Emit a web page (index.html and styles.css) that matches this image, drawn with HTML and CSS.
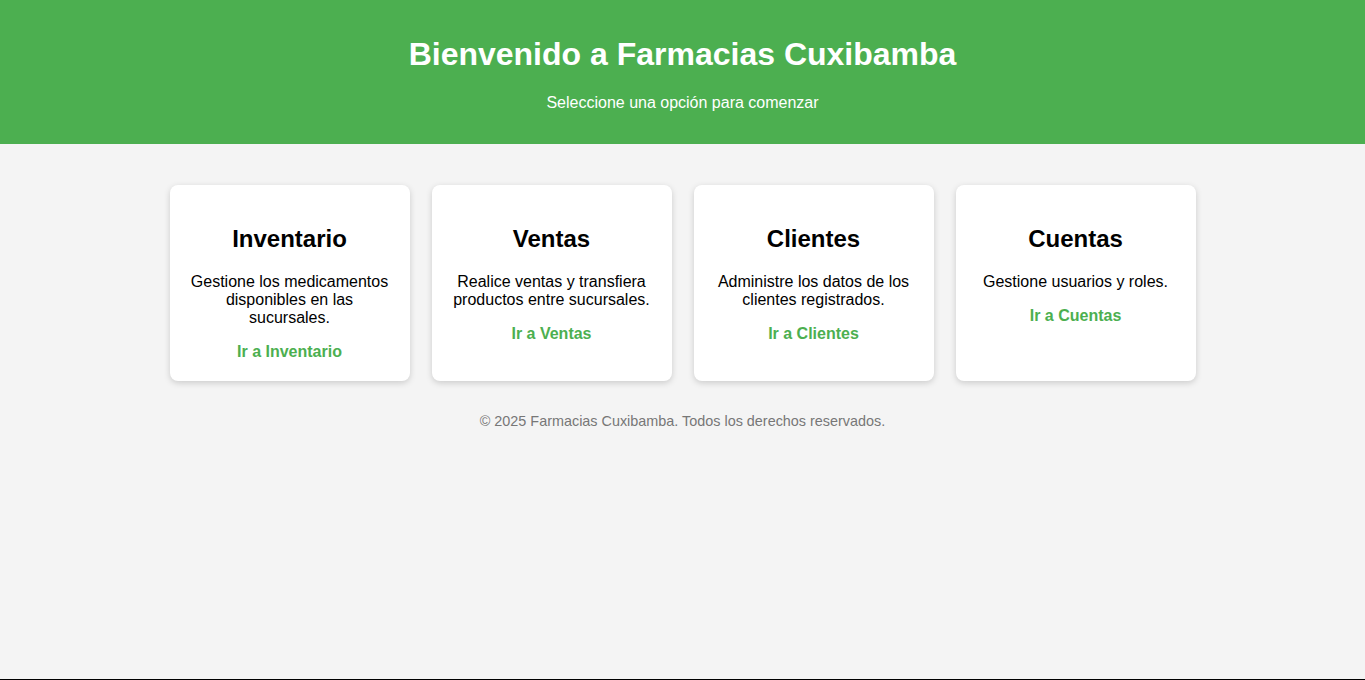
FILE: index.html
```html
<!DOCTYPE html>
<html lang="es">
<head>
<meta charset="utf-8">
<title>Farmacias Cuxibamba</title>
<link rel="stylesheet" href="styles.css">
</head>
<body>
<div class="page">
  <header class="hero">
    <h1 class="hero-title">Bienvenido a Farmacias Cuxibamba</h1>
    <p class="hero-sub">Seleccione una opción para comenzar</p>
  </header>
  <main class="cards">
    <section class="card">
      <h2 class="card-title">Inventario</h2>
      <p class="card-text">Gestione los medicamentos disponibles en las sucursales.</p>
      <a class="card-link" href="#">Ir a Inventario</a>
    </section>
    <section class="card">
      <h2 class="card-title">Ventas</h2>
      <p class="card-text">Realice ventas y transfiera productos entre sucursales.</p>
      <a class="card-link" href="#">Ir a Ventas</a>
    </section>
    <section class="card">
      <h2 class="card-title">Clientes</h2>
      <p class="card-text">Administre los datos de los clientes registrados.</p>
      <a class="card-link" href="#">Ir a Clientes</a>
    </section>
    <section class="card">
      <h2 class="card-title">Cuentas</h2>
      <p class="card-text">Gestione usuarios y roles.</p>
      <a class="card-link" href="#">Ir a Cuentas</a>
    </section>
  </main>
  <footer class="foot">© 2025 Farmacias Cuxibamba. Todos los derechos reservados.</footer>
</div>
</body>
</html>
```
FILE: styles.css
```css
html, body {
  margin: 0;
  padding: 0;
}
body {
  font-family: "Liberation Sans", Arial, sans-serif;
  background: #f4f4f4;
  color: #000;
}
.page {
  min-height: 100vh;
  box-sizing: border-box;
  border-bottom: 1px solid #000;
}
.hero {
  background: #4caf50;
  color: #fff;
  text-align: center;
  padding: 15px 20px 16px;
}
.hero-title {
  font-size: 32px;
  font-weight: bold;
  margin: 21px 0 21px;
  line-height: 37px;
}
.hero-sub {
  font-size: 16px;
  margin: 0 0 16px;
  line-height: 18px;
}
.cards {
  display: flex;
  justify-content: center;
  align-items: stretch;
  gap: 22px;
  padding: 41px 20px 0;
}
.card {
  width: 240px;
  box-sizing: border-box;
  background: #fff;
  border-radius: 8px;
  padding: 20px;
  text-align: center;
  box-shadow: 0 2px 6px rgba(0, 0, 0, 0.17);
}
.card-title {
  font-size: 24px;
  font-weight: bold;
  margin: 20px 0 20px;
  line-height: 28px;
}
.card-text {
  font-size: 16px;
  line-height: 18px;
  margin: 0 0 16px;
}
.card-link {
  display: inline-block;
  color: #4caf50;
  font-weight: bold;
  font-size: 16px;
  text-decoration: none;
  line-height: 18px;
}
.foot {
  text-align: center;
  color: #777;
  font-size: 14.4px;
  line-height: 16px;
  padding: 32px 0 20px;
}
```
